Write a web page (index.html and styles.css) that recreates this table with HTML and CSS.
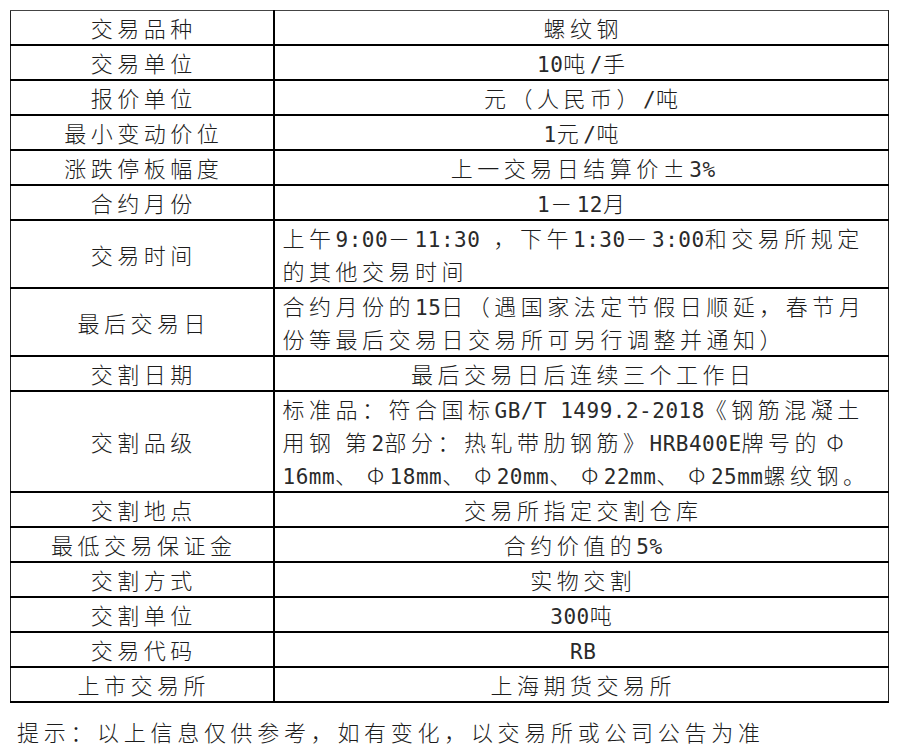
FILE: index.html
```html
<!DOCTYPE html>
<html lang="zh-CN">
<head>
<meta charset="utf-8">
<title>螺纹钢期货合约</title>
<link rel="stylesheet" href="styles.css">
</head>
<body>
<table class="spec">
  <colgroup><col class="c-name"><col class="c-val"></colgroup>
  <tbody>
    <tr><td class="k">交易品种</td><td class="v">螺纹钢</td></tr>
    <tr><td class="k">交易单位</td><td class="v"><span class="n">10</span>吨<span class="n">/</span>手</td></tr>
    <tr><td class="k">报价单位</td><td class="v">元（人民币）<span class="n">/</span>吨</td></tr>
    <tr><td class="k">最小变动价位</td><td class="v"><span class="n">1</span>元<span class="n">/</span>吨</td></tr>
    <tr><td class="k">涨跌停板幅度</td><td class="v">上一交易日结算价±<span class="n">3%</span></td></tr>
    <tr><td class="k">合约月份</td><td class="v"><span class="n">1</span>－<span class="n">12</span>月</td></tr>
    <tr><td class="k">交易时间</td><td class="v multi">上午<span class="n">9:00</span>－<span class="n">11:30 </span>，下午<span class="n">1:30</span>－<span class="n">3:00</span>和交易所规定<br>的其他交易时间</td></tr>
    <tr><td class="k">最后交易日</td><td class="v multi">合约月份的<span class="n">15</span>日（遇国家法定节假日顺延，春节月<br>份等最后交易日交易所可另行调整并通知）</td></tr>
    <tr><td class="k">交割日期</td><td class="v">最后交易日后连续三个工作日</td></tr>
    <tr><td class="k">交割品级</td><td class="v multi">标准品：符合国标<span class="n">GB/T 1499.2-2018</span>《钢筋混凝土<br>用钢 第<span class="n">2</span>部分：热轧带肋钢筋》<span class="n">HRB400E</span>牌号的<span class="phi">Φ</span><br><span class="n">16mm</span>、<span class="phi">Φ</span><span class="n">18mm</span>、<span class="phi">Φ</span><span class="n">20mm</span>、<span class="phi">Φ</span><span class="n">22mm</span>、<span class="phi">Φ</span><span class="n">25mm</span>螺纹钢。</td></tr>
    <tr><td class="k">交割地点</td><td class="v">交易所指定交割仓库</td></tr>
    <tr><td class="k">最低交易保证金</td><td class="v">合约价值的<span class="n">5%</span></td></tr>
    <tr><td class="k">交割方式</td><td class="v">实物交割</td></tr>
    <tr><td class="k">交割单位</td><td class="v"><span class="n">300</span>吨</td></tr>
    <tr><td class="k">交易代码</td><td class="v"><span class="n">RB</span></td></tr>
    <tr><td class="k">上市交易所</td><td class="v">上海期货交易所</td></tr>
  </tbody>
</table>
<p class="note">提示：以上信息仅供参考，如有变化，以交易所或公司公告为准</p>
</body>
</html>
```
FILE: styles.css
```css
html, body {
  background: #ffffff;
}
body {
  margin: 10px 0 0 10px;
  font-family: "Noto Sans CJK SC", "Noto Sans", sans-serif;
  font-size: 22px;
  font-weight: 300;
  color: #1c1c1c;
}
.spec {
  border-collapse: collapse;
  width: 879px;
  table-layout: fixed;
  border-top: 1px solid #444;
  border-left: 1px solid #222;
  border-right: 1px solid #222;
}
.c-name { width: 263px; }
.spec td {
  padding: 0;
  line-height: 33px;
  border-bottom: 2px solid #000;
  letter-spacing: 4.5px;
  white-space: nowrap;
  vertical-align: middle;
}
.spec td.k {
  text-align: center;
  border-right: 2px solid #000;
  padding-left: 4px;
}
.spec td.v {
  text-align: center;
  padding-left: 4px;
}
.spec td.multi {
  text-align: left;
  padding-left: 8px;
}
.n {
  font-family: "DejaVu Sans Mono", "Liberation Mono", monospace;
  font-size: 21px;
  font-weight: 400;
  letter-spacing: 0.5px;
  line-height: 1;
  color: #2a2a2a;
}
.phi {
  display: inline-block;
  width: 28px;
  text-align: center;
  line-height: 1;
  letter-spacing: 0;
}
.note {
  margin: 12px 0 0 7px;
  line-height: 33px;
  letter-spacing: 4.7px;
}
```
